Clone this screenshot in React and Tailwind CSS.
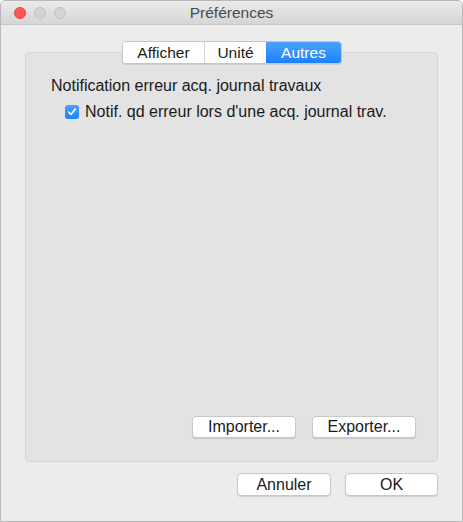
import React, { useState } from 'react';

const font = { fontFamily: '"Helvetica Neue", "Liberation Sans", Arial, sans-serif' };

const Button = ({ children, className = '' }) => (
  <button
    className={`h-[22px] rounded-[4px] bg-white border border-[#c8c8c8] shadow-[0_1px_1px_rgba(0,0,0,0.12)] text-[16px] text-[#1a1a1a] leading-none ${className}`}
  >
    {children}
  </button>
);

const App = () => {
  const [tab, setTab] = useState('Autres');
  const [checked, setChecked] = useState(true);
  const tabs = [
    { name: 'Afficher', w: 'w-[81px]' },
    { name: 'Unité', w: 'w-[62px]' },
    { name: 'Autres', w: 'w-[75px]' },
  ];

  return (
    <div className="w-[463px] h-[522px] bg-white" style={font}>
      <div className="w-full h-full flex flex-col bg-[#ececec] border border-[#b9b9b9] rounded-t-[5px] overflow-hidden">
        {/* title bar */}
        <div className="relative h-[24px] shrink-0 flex items-center justify-center bg-gradient-to-b from-[#ebebeb] to-[#d5d5d5] border-b border-[#c6c6c6]">
          <div className="absolute left-[13px] top-[6px] flex gap-[8px]">
            <span className="w-[12px] h-[12px] rounded-full bg-[#fc5753] border border-[#df4744]" />
            <span className="w-[12px] h-[12px] rounded-full bg-[#d3d3d3] border border-[#c2c2c2]" />
            <span className="w-[12px] h-[12px] rounded-full bg-[#d3d3d3] border border-[#c2c2c2]" />
          </div>
          <span className="text-[15.5px] text-[#4a4a4a] leading-none pt-[1px]">Préférences</span>
        </div>

        <div className="flex-1 flex flex-col px-[24px] pt-[16px] pb-[25px]">
          {/* tabs */}
          <div className="relative z-10 flex justify-center pr-[1px]">
            <div className="flex h-[23px] rounded-[4px] border border-[#c6c6c6] bg-white shadow-[0_1px_1px_rgba(0,0,0,0.1)] overflow-hidden ml-[2px]">
              {tabs.map((t, i) => (
                <button
                  key={t.name}
                  onClick={() => setTab(t.name)}
                  className={`${t.w} h-full text-[15.5px] leading-none ${i > 0 ? 'border-l border-[#d4d4d4]' : ''} ${
                    tab === t.name
                      ? 'bg-gradient-to-b from-[#4ba1fc] to-[#1a82fb] text-white border-l-0'
                      : 'bg-white text-[#1a1a1a]'
                  }`}
                >
                  {t.name}
                </button>
              ))}
            </div>
          </div>

          {/* tab panel */}
          <div className="-mt-[12px] flex-1 flex flex-col bg-[#e3e3e3] border border-[#d6d6d6] rounded-[4px] pl-[25px] pr-[21px] pt-[24px] pb-[23px]">
            <div className="text-[16px] text-[#1a1a1a] leading-[18px]">Notification erreur acq. journal travaux</div>
            <label className="mt-[8px] ml-[14px] flex items-center gap-[6px] text-[16px] text-[#1a1a1a] leading-[18px] cursor-default">
              <span
                onClick={() => setChecked(!checked)}
                className={`w-[14px] h-[14px] shrink-0 rounded-[3px] flex items-center justify-center ${
                  checked ? 'bg-gradient-to-b from-[#4ba1fc] to-[#1a82fb]' : 'bg-white border border-[#b5b5b5]'
                }`}
              >
                {checked && (
                  <svg width="10" height="10" viewBox="0 0 10 10">
                    <path d="M1.8 5.2 L4 7.5 L8.3 2" fill="none" stroke="white" strokeWidth="1.6" strokeLinecap="round" strokeLinejoin="round" />
                  </svg>
                )}
              </span>
              Notif. qd erreur lors d'une acq. journal trav.
            </label>

            <div className="mt-auto flex justify-end gap-[16px]">
              <Button className="w-[104px]">Importer...</Button>
              <Button className="w-[104px]">Exporter...</Button>
            </div>
          </div>

          {/* footer */}
          <div className="mt-[11px] flex justify-end gap-[14px]">
            <Button className="w-[94px] h-[23px]">Annuler</Button>
            <Button className="w-[93px] h-[23px]">OK</Button>
          </div>
        </div>
      </div>
    </div>
  );
};

export default App;
